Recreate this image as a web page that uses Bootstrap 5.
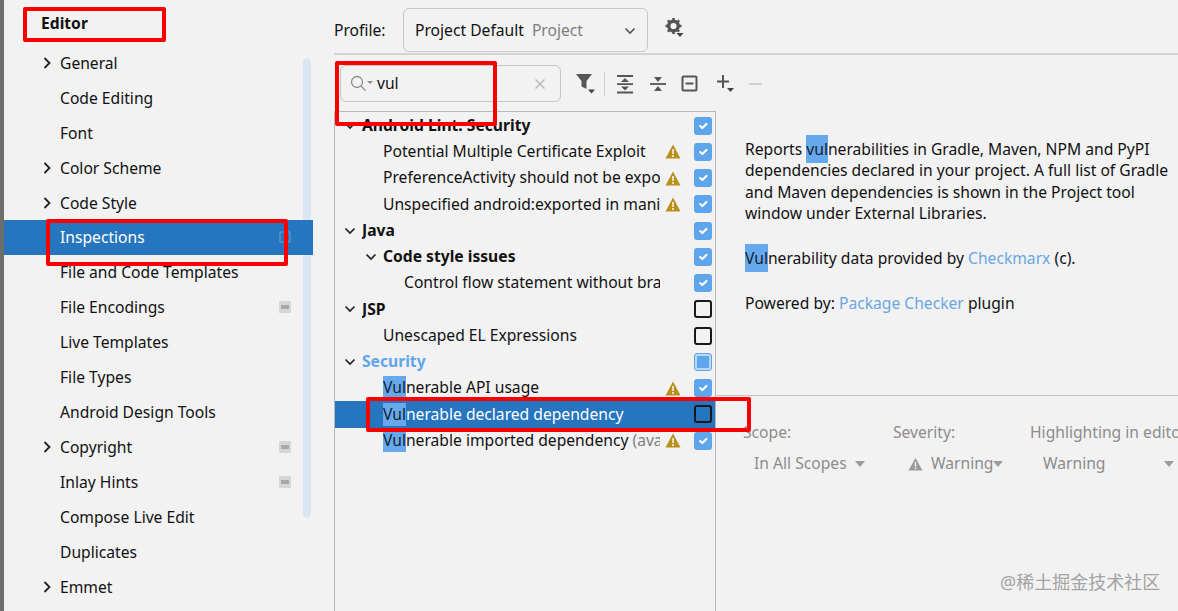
<!DOCTYPE html>
<html lang="en">
<head>
  <meta charset="UTF-8">
  <title>Inspections</title>
  <link href="https://cdn.jsdelivr.net/npm/bootstrap@5.3.0/dist/css/bootstrap.min.css" rel="stylesheet">
  <style>
    html, body {
      height: 611px;
      overflow: hidden;
    }
    body {
      background-color: #f2f2f2;
      color: #111;
      font-family: "Noto Sans", "Noto Sans CJK SC", sans-serif;
      font-size: 15.65px;
      position: relative;
    }
    .edge-strip {
      width: 4px;
      background-color: #6e6e6c;
      flex: none;
    }
    .side-pane {
      width: 309px;
      flex: none;
      position: relative;
    }
    .side-title {
      padding: 12px 0 0 37px;
      height: 46px;
      font-weight: 700;
    }
    .side-pane .list-group-item {
      background: transparent;
      border: 0;
      padding: 0 0 0 56px;
      height: 35px;
      line-height: 35px;
      color: #111;
      position: relative;
      border-radius: 0;
    }
    .side-pane .list-group-item.active {
      background-color: #2675bf;
      color: #fff;
    }
    .side-arrow {
      position: absolute;
      left: 39px;
      top: 11px;
    }
    .side-badge {
      position: absolute;
      right: 22px;
      top: 11px;
    }
    .side-scroll {
      position: absolute;
      left: 299px;
      top: 58px;
      width: 8px;
      height: 460px;
      border-radius: 4px;
      background-color: #dce6f3;
    }
    .main-pane {
      margin-left: 21px;
      min-width: 0;
      flex: 1;
    }
    .profile-bar {
      height: 55px;
      border-bottom: 2px solid #d2d2d2;
      padding-top: 8px;
    }
    .profile-label {
      width: 69px;
      flex: none;
      padding-top: 11px;
    }
    .profile-box {
      width: 245px;
      height: 44px;
      border: 1px solid #c6c6c6;
      border-radius: 6px;
      padding: 2px 11px 0;
      flex: none;
    }
    .gear-icon {
      margin: 10px 0 0 17px;
    }
    .muted-text {
      color: #7f7f7f;
    }
    .tool-bar {
      height: 56px;
      padding: 10px 0 0 6px;
    }
    .search-box {
      width: 221px;
      height: 37px;
      border: 1px solid #c6c6c6;
      border-radius: 6px;
      padding: 0 14px 0 8px;
      flex: none;
    }
    .vul-text {
      margin-left: 2px;
    }
    .tool-icons {
      height: 37px;
      margin-left: 14px;
    }
    .tool-sep {
      width: 1px;
      height: 24px;
      background-color: #d0d0d0;
    }
    .tgap-8 { margin-left: 8px; }
    .tgap-11 { margin-left: 11px; }
    .tgap-14 { margin-left: 14px; }
    .tgap-15 { margin-left: 15px; }
    .tgap-18 { margin-left: 18px; }
    .tree-pane {
      width: 382px;
      flex: none;
      height: 500px;
      border-left: 1px solid #b8b8b8;
      border-right: 1px solid #b8b8b8;
      border-top: 1px solid #b8b8b8;
      padding-top: 0.5px;
    }
    .tree-row {
      height: 26.25px;
      padding-right: 3px;
      position: relative;
    }
    .tree-row.picked {
      background-color: #2675bf;
      color: #fff;
    }
    .tree-text {
      white-space: nowrap;
      overflow: hidden;
      width: 298px;
      flex: none;
      margin-left: 27px;
    }
    .tree-text.lv-two {
      margin-left: 48px;
      width: 277px;
    }
    .tree-text.lv-three {
      margin-left: 69px;
      width: 256px;
    }
    .tree-head {
      font-weight: 700;
      white-space: nowrap;
    }
    .tree-chevron {
      position: absolute;
      top: 9px;
      left: 9px;
    }
    .tree-chevron.lv-two {
      left: 30px;
    }
    .warn-slot {
      width: 16px;
      margin-left: 5px;
      flex: none;
    }
    .tree-row .form-check-input {
      width: 18px;
      height: 18px;
      margin: 0 0 0 auto;
      border: 2px solid #1a1a1a;
      border-radius: 3px;
      background-color: transparent;
      flex: none;
      opacity: 1;
    }
    .tree-row .form-check-input:checked {
      background-color: #5fa5ec;
      border-color: #5fa5ec;
    }
    .mixed-box {
      width: 18px;
      height: 18px;
      margin-left: auto;
      flex: none;
      border-radius: 3px;
      background-color: #b9d8f6;
      border: 1px solid #5fa5ec;
      padding: 2px;
    }
    .mixed-box span {
      display: block;
      height: 12px;
      background-color: #5fa5ec;
    }
    .hit-mark {
      background-color: #66a8ec;
      padding: 3px 0;
      color: #123;
    }
    .sec-title {
      color: #5fa5ec;
    }
    .desc-pane {
      height: 285px;
      border-bottom: 1px solid #c4c4c4;
      padding: 28px 0 0 29px;
      line-height: 21.3px;
    }
    .desc-pane p {
      margin-bottom: 24px;
    }
    .desc-link {
      color: #6aa6e2;
      text-decoration: none;
    }
    .options-pane {
      padding: 25px 0 0 27px;
      color: #8c8c8c;
      white-space: nowrap;
    }
    .opt-cell-a { width: 150px; flex: none; }
    .opt-cell-b { width: 137px; flex: none; }
    .opt-row {
      margin-top: 8px;
      color: #8c8c8c;
    }
    .opt-first {
      padding-left: 11px;
    }
    .opt-warn {
      margin-left: 15px;
    }
    .opt-last {
      padding: 0 4px 0 13px;
    }
    .opt-tri {
      width: 0;
      height: 0;
      border-left: 5.5px solid transparent;
      border-right: 5.5px solid transparent;
      border-top: 6px solid #9c9c9c;
    }
    .red-box {
      position: absolute;
      border: 4px solid #fa0000;
      border-radius: 2px;
      pointer-events: none;
      z-index: 5;
    }
    .red-editor { left: 23px; top: 7px; width: 143px; height: 35px; }
    .red-insp { left: 46px; top: 219px; width: 242px; height: 47px; }
    .red-search { left: 335px; top: 61px; width: 162px; height: 65px; }
    .red-row { left: 366px; top: 397px; width: 385px; height: 35px; }
    .wm-text {
      position: absolute;
      left: 1000px;
      top: 569px;
      color: #a3a3a3;
      font-size: 18px;
    }
  </style>
</head>
<body>
  <div class="d-flex h-100">
    <div class="edge-strip"></div>

    <div class="side-pane">
      <div class="side-title">Editor</div>
      <div class="list-group list-group-flush" id="sideList"></div>
      <div class="side-scroll"></div>
    </div>

    <div class="main-pane">
      <div class="profile-bar d-flex align-items-start">
        <span class="profile-label">Profile:</span>
        <div class="profile-box d-flex align-items-center">
          <span>Project Default</span>
          <span class="muted-text ms-2">Project</span>
          <svg class="ms-auto" width="12" height="8" viewBox="0 0 12 8"><path d="M1.500 1.500 6 6l4.500-4.500" fill="none" stroke="#555" stroke-width="1.600"/></svg>
        </div>
        <svg class="gear-icon" width="19" height="19" viewBox="0 0 19 19">
          <circle cx="8.500" cy="8" r="4.800" fill="none" stroke="#555" stroke-width="3.400"/>
          <path d="M8.500 0v16M.5 8h16M2.800 2.300l11.400 11.400M14.200 2.300 2.800 13.700" stroke="#555" stroke-width="2.600" stroke-dasharray="3 10 3"/>
          <path d="M11.500 15h7L15 19z" fill="#444"/>
        </svg>
      </div>

      <div class="tool-bar d-flex align-items-start">
        <div class="search-box d-flex align-items-center">
          <svg width="26" height="20" viewBox="0 0 26 20"><circle cx="8" cy="8" r="5.500" fill="none" stroke="#8c8c8c" stroke-width="1.300"/><path d="m12 12 4.500 4.500" stroke="#8c8c8c" stroke-width="1.300"/><path d="M18 7h6l-3 3z" fill="#8c8c8c"/></svg>
          <span class="vul-text">vul</span>
          <svg class="ms-auto" width="12" height="12" viewBox="0 0 12 12"><path d="m1.500 1.500 9 9m0-9-9 9" stroke="#b5b5b5" stroke-width="1.300"/></svg>
        </div>
        <div class="tool-icons d-flex align-items-center">
          <svg width="21" height="22" viewBox="0 0 21 22"><path d="M1 1h16l-5.500 7v8l-5-2.500V8z" fill="#555"/><path d="M13 16.500h7l-3.500 4z" fill="#444"/></svg>
          <span class="tool-sep tgap-8"></span>
          <svg class="tgap-11" width="18" height="20" viewBox="0 0 18 20"><path d="M1 2h16M1 18.500h16M1 10.200h16" stroke="#555" stroke-width="1.800" fill="none"/><path d="M9 4l4 4H5zM9 16.500l-4-4h8z" fill="#555"/></svg>
          <svg class="tgap-15" width="18" height="18" viewBox="0 0 18 18"><path d="M1 9h16" stroke="#555" stroke-width="1.800"/><path d="M9 7 5 2h8zM9 11l4 5H5z" fill="#555"/></svg>
          <svg class="tgap-14" width="17" height="17" viewBox="0 0 17 17"><rect x="1.500" y="1.500" width="14" height="14" rx="1" fill="none" stroke="#555" stroke-width="2"/><path d="M4.500 8.500h8" stroke="#555" stroke-width="2"/></svg>
          <svg class="tgap-18" width="18" height="20" viewBox="0 0 18 20"><path d="M7 1v13M1 7.500h12" stroke="#555" stroke-width="2"/><path d="M11 14h7l-3.500 4z" fill="#444"/></svg>
          <svg class="tgap-15" width="14" height="4" viewBox="0 0 14 4"><path d="M0 2h13" stroke="#d0d0d0" stroke-width="2"/></svg>
        </div>
      </div>

      <div class="d-flex">
        <div class="tree-pane" id="treePane"></div>
        <div class="flex-grow-1" style="min-width:0">
          <div class="desc-pane">
            <p>Reports <span class="hit-mark">vul</span>nerabilities in Gradle, Maven, NPM and PyPI dependencies declared in your project. A full list of Gradle and Maven dependencies is shown in the Project tool window under External Libraries.</p>
            <p><span class="hit-mark">Vul</span>nerability data provided by <a class="desc-link" href="#">Checkmarx</a> (c).</p>
            <p>Powered by: <a class="desc-link" href="#">Package Checker</a> plugin</p>
          </div>
          <div class="options-pane">
            <div class="d-flex">
              <span class="opt-cell-a">Scope:</span>
              <span class="opt-cell-b">Severity:</span>
              <span>Highlighting in editor:</span>
            </div>
            <div class="d-flex opt-row align-items-center">
              <div class="opt-cell-a opt-first d-flex align-items-center">
                <span>In All Scopes</span>
                <span class="opt-tri ms-2"></span>
              </div>
              <div class="opt-cell-b d-flex align-items-center">
                <svg class="opt-warn" width="15" height="14" viewBox="0 0 15 14"><path d="M7.500 1 14.500 13.500H.5z" fill="#999"/><path d="M7.500 5v4.500M7.500 10.500v1.500" stroke="#f2f2f2" stroke-width="1.500"/></svg>
                <span class="ms-2">Warning</span>
                <span class="opt-tri"></span>
              </div>
              <div class="opt-last d-flex align-items-center flex-grow-1">
                <span>Warning</span>
                <span class="opt-tri ms-auto"></span>
              </div>
            </div>
          </div>
        </div>
      </div>
    </div>
  </div>

  <div class="red-box red-editor"></div>
  <div class="red-box red-insp"></div>
  <div class="red-box red-search"></div>
  <div class="red-box red-row"></div>
  <div class="wm-text">@稀土掘金技术社区</div>

  <script>
    const sideItems = [
      ['General', 1, 0], ['Code Editing', 0, 0], ['Font', 0, 0], ['Color Scheme', 1, 0],
      ['Code Style', 1, 0], ['Inspections', 0, 2], ['File and Code Templates', 0, 0],
      ['File Encodings', 0, 1], ['Live Templates', 0, 0], ['File Types', 0, 0],
      ['Android Design Tools', 0, 0], ['Copyright', 1, 1], ['Inlay Hints', 0, 1],
      ['Compose Live Edit', 0, 0], ['Duplicates', 0, 0], ['Emmet', 1, 0]
    ];
    const arrow = '<svg class="side-arrow" width="8" height="12" viewBox="0 0 8 12"><path d="M1.500 1 6.500 6l-5 5" fill="none" stroke="#222" stroke-width="1.800"/></svg>';
    const badge = '<svg class="side-badge" width="12" height="12" viewBox="0 0 12 12"><rect width="12" height="12" rx="1" fill="#d6d6d6"/><rect x="2" y="4" width="8" height="4" fill="#a8a8a8"/></svg>';
    const badgeDim = '<svg class="side-badge" width="12" height="12" viewBox="0 0 12 12"><rect x="1" y="1" width="10" height="10" rx="1" fill="none" stroke="#5c93cb" stroke-width="1.500"/></svg>';
    document.getElementById('sideList').innerHTML = sideItems.map(([name, hasArrow, b]) =>
      `<div class="list-group-item${b === 2 ? ' active' : ''}">${hasArrow ? arrow : ''}${name}${b === 1 ? badge : ''}${b === 2 ? badgeDim : ''}</div>`
    ).join('');

    const warn = '<svg width="16" height="15" viewBox="0 0 16 15"><path d="M8 .5 15.500 14.500H.5z" fill="#b8901a"/><path d="M8 5v5M8 11v2" stroke="#f2f2f2" stroke-width="1.600"/></svg>';
    const chev = lv => `<svg class="tree-chevron${lv === 2 ? ' lv-two' : ''}" width="12" height="8" viewBox="0 0 12 8"><path d="M1.500 1.500 6 6l4.500-4.500" fill="none" stroke="#222" stroke-width="1.700"/></svg>`;
    const vul = '<span class="hit-mark">Vul</span>';
    const treeRows = [
      { head: 'Android Lint: Security', lv: 1, on: 1 },
      { text: 'Potential Multiple Certificate Exploit', w: 1, on: 1 },
      { text: 'PreferenceActivity should not be exported', w: 1, on: 1 },
      { text: 'Unspecified android:exported in manifest', w: 1, on: 1 },
      { head: 'Java', lv: 1, on: 1 },
      { head: 'Code style issues', lv: 2, on: 1 },
      { text: 'Control flow statement without braces', deep: 1, on: 1 },
      { head: 'JSP', lv: 1, on: 0 },
      { text: 'Unescaped EL Expressions', on: 0 },
      { head: '<span class="sec-title">Security</span>', lv: 1, mixed: 1 },
      { text: vul + 'nerable API usage', w: 1, on: 1 },
      { text: vul + 'nerable declared dependency', on: 0, picked: 1 },
      { text: vul + 'nerable imported dependency <span class="muted-text">(available)</span>', w: 1, on: 1 }
    ];
    document.getElementById('treePane').innerHTML = treeRows.map(r => {
      let label;
      if (r.head) {
        label = chev(r.lv) + `<span class="tree-head tree-text ${r.lv === 2 ? 'lv-two' : ''}">${r.head}</span>`;
      } else {
        label = `<span class="tree-text ${r.deep ? 'lv-three' : 'lv-two'}">${r.text}</span>`;
      }
      const mark = `<span class="warn-slot d-flex">${r.w ? warn : ''}</span>`;
      const box = r.mixed
        ? '<span class="mixed-box"><span></span></span>'
        : `<input class="form-check-input" type="checkbox"${r.on ? ' checked' : ''}>`;
      return `<div class="tree-row d-flex align-items-center${r.picked ? ' picked' : ''}">${label}${mark}${box}</div>`;
    }).join('');
  </script>
  <script src="https://cdn.jsdelivr.net/npm/bootstrap@5.3.0/dist/js/bootstrap.bundle.min.js"></script>
</body>
</html>
